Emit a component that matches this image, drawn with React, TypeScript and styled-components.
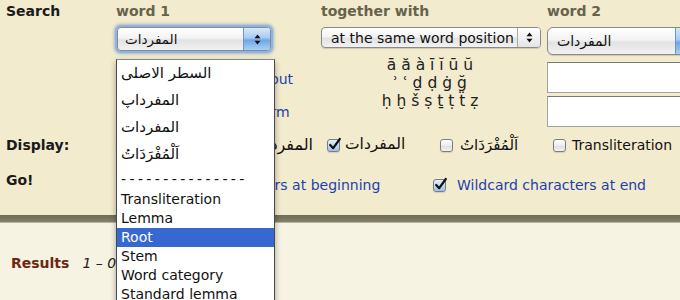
import React from 'react';
import styled, { createGlobalStyle } from 'styled-components';

const GlobalStyle = createGlobalStyle`
    html, body {
        margin: 0;
        padding: 0;
        background: #f7f3e3;
    }
    body {
        font-family: "DejaVu Sans", "Liberation Sans", sans-serif;
        font-size: 14px;
        color: #111;
    }
`

const Page = styled.div`
    position: relative;
    width: 680px;
    height: 300px;
    overflow: hidden;
    white-space: nowrap;
`

const Panel = styled.div`
    height: 215px;
    box-sizing: border-box;
    background: #f3ebcd;
    display: grid;
    grid-template-columns: 116px 205px 226px 200px;
    grid-template-rows: 22px 34px 74px 30px 36px;
`

const Band = styled.div`
    height: 7px;
    background: linear-gradient(#6f6b54, #858169);
    border-bottom: 1px solid #b9b59e;
`

const RowLabel = styled.div<{ $top?: number }>`
    padding-left: 6px;
    padding-top: ${p => p.$top ?? 0}px;
    font-weight: bold;
    line-height: 20px;
    color: #1a1a1a;
`

const CenterLabel = styled(RowLabel)`
    line-height: 30px;
`

const ColumnHead = styled.div`
    padding-top: 1px;
    line-height: 20px;
    font-weight: bold;
    color: #66634a;
`

const Ar = styled.span<{ $size: number }>`
    font-size: ${p => p.$size}px;
    line-height: 1;
`

const SelectBox = styled.div<{ $w: number; $h: number; $focus?: boolean; $mt: number }>`
    width: ${p => p.$w}px;
    height: ${p => p.$h}px;
    margin-top: ${p => p.$mt}px;
    margin-left: ${p => (p.$focus ? 1 : 0)}px;
    box-sizing: border-box;
    display: flex;
    align-items: center;
    border: 1px solid #8a8a8a;
    border-radius: ${p => (p.$h > 24 ? 6 : 4)}px;
    background: linear-gradient(#ffffff 0%, #f4f4f4 45%, #e2e2e2 55%, #f2f2f2 100%);
    box-shadow: ${p => (p.$focus ? '0 0 0 2px #8cb4e6, 0 0 3px 3px rgba(90, 140, 210, 0.55)' : '0 1px 1px rgba(0,0,0,0.15)')};
    overflow: hidden;
`

const SelectText = styled.span<{ $pad: number }>`
    flex: 1;
    padding-left: ${p => p.$pad}px;
    text-align: left;
`

const Arrows = styled.span<{ $blue?: boolean; $w: number }>`
    width: ${p => p.$w}px;
    align-self: stretch;
    display: flex;
    align-items: center;
    justify-content: center;
    border-left: 1px solid ${p => (p.$blue ? '#6f95c4' : '#a8a8a8')};
    background: ${p => (p.$blue
        ? 'linear-gradient(#d9e8fa 0%, #a9cbf1 45%, #6ea6e6 55%, #a8d0f7 100%)'
        : 'linear-gradient(#ffffff, #e4e4e4)')};
`

const Links = styled.div`
    padding-left: 20px;
    padding-top: 15px;
    display: flex;
    flex-direction: column;
    gap: 16px;
    line-height: 17px;
`

const BlueLink = styled.a`
    color: #1c3fae;
    text-decoration: none;
`

const Translit = styled.div`
    padding-right: 8px;
    text-align: center;
    font-size: 15.5px;
    line-height: 18px;
    color: #222;
`

const Inputs = styled.div`
    padding-top: 6px;
    display: flex;
    flex-direction: column;
    gap: 3px;
`

const TextInput = styled.div`
    width: 160px;
    height: 31px;
    box-sizing: border-box;
    background: #fff;
    border: 1px solid #a2a2a2;
    border-top-color: #7a7a7a;
`

const OptionRow = styled.div`
    grid-column: 2 / 5;
    display: flex;
    align-items: center;
`

const Option = styled.label<{ $w?: number; $gap: number; $end?: boolean }>`
    display: flex;
    align-items: center;
    gap: ${p => p.$gap}px;
    width: ${p => (p.$w ? `${p.$w}px` : 'auto')};
    flex-shrink: 0;
    justify-content: ${p => (p.$end ? 'flex-end' : 'flex-start')};
`

const WildRow = styled(OptionRow)`
    align-items: flex-start;
    padding-top: 15px;
    padding-left: 8px;
    line-height: 20px;
`

const Box = styled.span<{ $on?: boolean }>`
    position: relative;
    display: inline-block;
    width: 13px;
    height: 13px;
    flex-shrink: 0;
    box-sizing: border-box;
    border: 1px solid #7c7c7c;
    border-radius: 3px;
    background: ${p => (p.$on
        ? 'linear-gradient(#e3effc, #9cc3ef)'
        : 'linear-gradient(#ffffff 0%, #ededed 50%, #dcdcdc 51%, #f4f4f4 100%)')};
    box-shadow: 0 1px 1px rgba(0,0,0,0.12);
`

const Tick = styled.svg`
    position: absolute;
    left: 0;
    top: -3px;
`

const Lower = styled.div`
    padding: 30px 0 0 11px;
    display: flex;
    align-items: baseline;
    gap: 13px;
    line-height: 20px;
`

const ResultsTitle = styled.span`
    font-weight: bold;
    color: #6a2812;
`

const ResultsRange = styled.span`
    font-style: italic;
    color: #222;
`

const Dropdown = styled.ul`
    position: absolute;
    left: 116px;
    top: 59px;
    width: 159px;
    height: 260px;
    margin: 0;
    padding: 0;
    list-style: none;
    box-sizing: border-box;
    background: #fff;
    border: 1px solid #4a4a4a;
    border-top-color: #888;
    box-shadow: 0 3px 6px rgba(0,0,0,0.35);
    z-index: 5;
`

const Item = styled.li<{ $h: number; $active?: boolean; $arabic?: boolean; $spaced?: boolean }>`
    height: ${p => p.$h}px;
    line-height: ${p => p.$h}px;
    padding-left: 4px;
    font-size: ${p => (p.$arabic ? 15 : 14)}px;
    letter-spacing: ${p => (p.$spaced ? 3.4 : 0)}px;
    background: ${p => (p.$active ? '#3768d2' : 'transparent')};
    color: ${p => (p.$active ? '#fff' : '#111')};
    text-align: left;
`

function Check({ on }: { on?: boolean }) {
    return (
        <Box $on={on}>
            {on && (
                <Tick width="14" height="14" viewBox="0 0 14 14">
                    <path d="M2.2 8 L5.2 11.2 L11.8 2" fill="none" stroke="#111" strokeWidth="2.2" strokeLinecap="round" strokeLinejoin="round" />
                </Tick>
            )}
        </Box>
    );
}

function UpDown() {
    return (
        <svg width="7" height="11" viewBox="0 0 7 11">
            <path d="M3.5 0.5 L6.5 4.3 L0.5 4.3 Z" fill="#111" />
            <path d="M0.5 6.7 L6.5 6.7 L3.5 10.5 Z" fill="#111" />
        </svg>
    );
}

const menuItems: { label: string; h: number; active?: boolean; arabic?: boolean; spaced?: boolean }[] = [
    { label: 'السطر الاصلى', h: 27, arabic: true },
    { label: 'المفرداپ', h: 27, arabic: true },
    { label: 'المفردات', h: 27, arabic: true },
    { label: 'اَلْمُفْرَدَاتُ', h: 27, arabic: true },
    { label: '---------------', h: 22, spaced: true },
    { label: 'Transliteration', h: 19 },
    { label: 'Lemma', h: 19 },
    { label: 'Root', h: 19, active: true },
    { label: 'Stem', h: 19 },
    { label: 'Word category', h: 19 },
    { label: 'Standard lemma', h: 19 },
    { label: 'Part of speech', h: 19 },
];

export default function App() {
    return (
        <Page>
            <GlobalStyle />
            <Panel>
                <RowLabel $top={1}>Search</RowLabel>
                <ColumnHead>word 1</ColumnHead>
                <ColumnHead>together with</ColumnHead>
                <ColumnHead>word 2</ColumnHead>

                <div />
                <div>
                    <SelectBox $w={154} $h={24} $mt={5} $focus>
                        <SelectText $pad={7}><Ar $size={13.5}>المفردات</Ar></SelectText>
                        <Arrows $blue $w={26}><UpDown /></Arrows>
                    </SelectBox>
                </div>
                <div>
                    <SelectBox $w={220} $h={21} $mt={5}>
                        <SelectText $pad={9}>at the same word position</SelectText>
                        <Arrows $w={22}><UpDown /></Arrows>
                    </SelectBox>
                </div>
                <div>
                    <SelectBox $w={160} $h={28} $mt={5}>
                        <SelectText $pad={9}><Ar $size={14}>المفردات</Ar></SelectText>
                        <Arrows $blue $w={30}><UpDown /></Arrows>
                    </SelectBox>
                </div>

                <div />
                <Links>
                    <BlueLink href="#">Transliteration without</BlueLink>
                    <BlueLink href="#">Standard lemma form</BlueLink>
                </Links>
                <Translit>
                    <div>ā ă à ī ĭ ū ŭ</div>
                    <div>ʾ ʿ ḏ ḍ ġ ğ</div>
                    <div>ḥ ḫ š ṣ ṯ ṭ ẗ ẓ</div>
                </Translit>
                <Inputs>
                    <TextInput />
                    <TextInput />
                </Inputs>

                <CenterLabel>Display:</CenterLabel>
                <OptionRow>
                    <Option $w={100} $gap={5}><Check on /><Ar $size={16}>السطر الاصلى</Ar></Option>
                    <Option $w={97} $gap={5} $end><Check /><Ar $size={16}>المفرداپ</Ar></Option>
                    <Option $w={113} $gap={5} style={{ marginLeft: 14 }}><Check on /><Ar $size={15.5}>المفردات</Ar></Option>
                    <Option $w={113} $gap={7}><Check /><Ar $size={15}>اَلْمُفْرَدَاتُ</Ar></Option>
                    <Option $gap={6}><Check />Transliteration</Option>
                </OptionRow>

                <RowLabel $top={10}>Go!</RowLabel>
                <WildRow>
                    <Option $w={309} $gap={11}><Check />
                        <BlueLink as="span">Wildcard characters at beginning</BlueLink>
                    </Option>
                    <Option $gap={11}><Check on />
                        <BlueLink as="span">Wildcard characters at end</BlueLink>
                    </Option>
                </WildRow>
            </Panel>
            <Band />
            <Lower>
                <ResultsTitle>Results</ResultsTitle>
                <ResultsRange>1 – 0 of 0</ResultsRange>
            </Lower>
            <Dropdown>
                {menuItems.map(item => (
                    <Item key={item.label} $h={item.h} $active={item.active} $arabic={item.arabic} $spaced={item.spaced}>
                        {item.label}
                    </Item>
                ))}
            </Dropdown>
        </Page>
    );
}
